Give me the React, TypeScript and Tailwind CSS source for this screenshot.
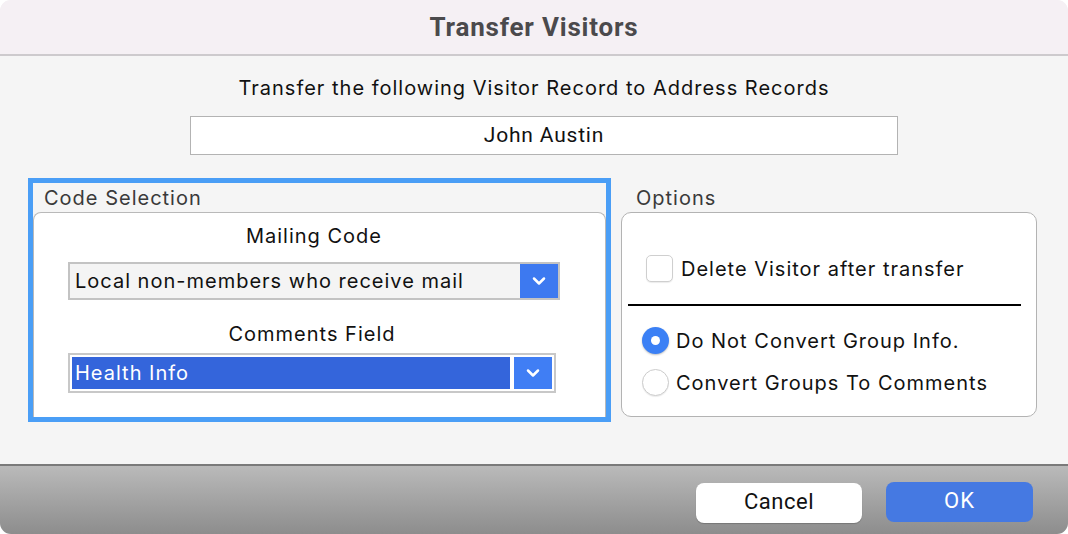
import { ChevronDown } from "lucide-react";

const sans = "font-['Inter','Noto_Sans',sans-serif]";
const narrow = "font-['Roboto','Liberation_Sans',sans-serif]";

function Chevron() {
  return <ChevronDown className="h-5 w-5 text-white" strokeWidth={3} />;
}

export default function App() {
  return (
    <div className="h-[534px] w-[1068px] bg-white">
      <div className={`flex h-full w-full flex-col overflow-hidden rounded-[11px] bg-[#f5f5f5] tracking-[1px] ${sans}`}>
        {/* title bar */}
        <div className="flex h-[56px] shrink-0 items-center justify-center border-b-2 border-[#cdcacd] bg-[#f5f0f4]">
          <h1 className={`text-[26px] font-bold tracking-[0.8px] text-[#4b4a4c] ${narrow}`}>Transfer Visitors</h1>
        </div>

        {/* body */}
        <div className="flex flex-1 flex-col">
          <p className="mt-[20px] text-center text-[20px] leading-[24px] text-[#111]">
            Transfer the following Visitor Record to Address Records
          </p>
          <div className="ml-[190px] mt-[16px] flex h-[39px] w-[708px] items-center justify-center border border-[#b3b3b3] bg-white">
            <span className={`text-[21px] tracking-[0.8px] text-[#111] ${narrow}`}>John Austin</span>
          </div>

          <div className="mt-[23px] flex gap-[10px] pl-[28px]">
            {/* Code Selection (focused) */}
            <div className="flex h-[244px] w-[583px] flex-col border-[5px] border-[#4a9ef6]">
              <div className="h-[29px] pl-[11px] pt-[3px] text-[20px] leading-[24px] text-[#3a3a3a]">Code Selection</div>
              <div className="flex flex-1 flex-col rounded-t-[8px] border border-b-0 border-[#b9b9b9] bg-white pl-[34px]">
                <div className="mt-[11px] w-[492px] text-center text-[20px] leading-[24px] text-[#111]">Mailing Code</div>
                <div className="mt-[14px] flex h-[38px] w-[492px] items-stretch border-2 border-[#c3c3c3] bg-[#f4f4f4]">
                  <span className="flex flex-1 items-center pl-[5px] text-[20px] text-[#111]">
                    Local non-members who receive mail
                  </span>
                  <span className="flex w-[38px] items-center justify-center bg-[#3d79f0]">
                    <Chevron />
                  </span>
                </div>
                <div className="mt-[22px] w-[488px] text-center text-[20px] leading-[24px] text-[#111]">Comments Field</div>
                <div className="mt-[7px] flex h-[40px] w-[488px] items-stretch gap-[4px] border-2 border-[#c8c8c8] bg-white p-[2px]">
                  <span className="flex flex-1 items-center bg-[#3465db] pl-[3px] text-[20px] text-white">
                    Health Info
                  </span>
                  <span className="flex w-[38px] items-center justify-center bg-[#407ef4]">
                    <Chevron />
                  </span>
                </div>
              </div>
            </div>

            {/* Options */}
            <div className="flex w-[416px] flex-col">
              <div className="h-[34px] pl-[15px] pt-[8px] text-[20px] leading-[24px] text-[#3a3a3a]">Options</div>
              <div className="flex h-[205px] flex-col rounded-[10px] border border-[#b3b3b3] bg-white">
                <label className="mt-[42px] flex items-center gap-[8px] pl-[24px]">
                  <span className="h-[27px] w-[27px] rounded-[5px] border border-[#cfcfcf] bg-white shadow-[0_1px_1px_rgba(0,0,0,0.08)]" />
                  <span className="text-[20px] leading-[24px] text-[#111]">Delete Visitor after transfer</span>
                </label>
                <div className="ml-[6px] mr-[15px] mt-[22px] h-[2px] bg-black" />
                <label className="mt-[21px] flex items-center gap-[7px] pl-[20px]">
                  <span className="flex h-[27px] w-[27px] items-center justify-center rounded-full bg-[#3b80f5] shadow-[0_1px_2px_rgba(0,0,0,0.25)]">
                    <span className="h-[9px] w-[9px] rounded-full bg-white" />
                  </span>
                  <span className="text-[20px] leading-[24px] text-[#111]">Do Not Convert Group Info.</span>
                </label>
                <label className="mt-[15px] flex items-center gap-[7px] pl-[20px]">
                  <span className="h-[27px] w-[27px] rounded-full border border-[#cccccc] bg-white shadow-[0_1px_1px_rgba(0,0,0,0.08)]" />
                  <span className="text-[20px] leading-[24px] text-[#111]">Convert Groups To Comments</span>
                </label>
              </div>
            </div>
          </div>
        </div>

        {/* bottom bar */}
        <div className="flex h-[70px] shrink-0 items-start justify-end gap-[24px] border-t-2 border-[#7a7a7a] bg-gradient-to-b from-[#bababa] to-[#8d8d8d] pr-[35px] pt-[16px]">
          <button className={`mt-[1px] h-[40px] w-[166px] rounded-[8px] bg-white pb-[4px] text-[22px] tracking-[0.5px] text-[#111] shadow-[0_1px_1px_rgba(0,0,0,0.2)] ${narrow}`}>
            Cancel
          </button>
          <button className={`h-[40px] w-[147px] rounded-[8px] bg-[#4579e2] pb-[4px] text-[22px] tracking-[1px] text-white ${narrow}`}>
            OK
          </button>
        </div>
      </div>
    </div>
  );
}
